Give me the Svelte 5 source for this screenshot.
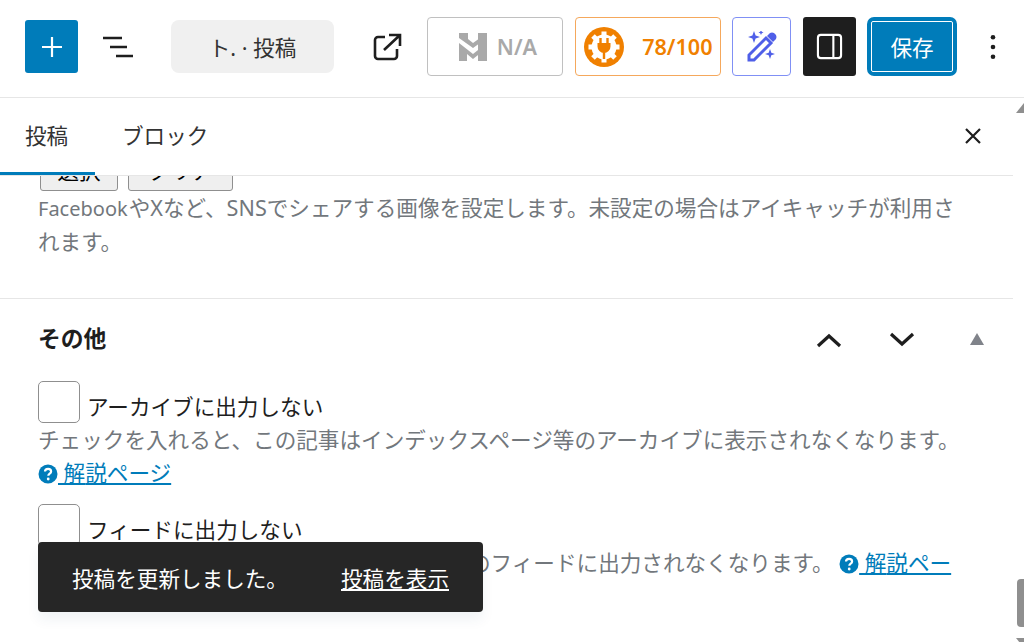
<script>
  const helpUrl = "#";
</script>

{#snippet help()}
  <svg class="help" viewBox="0 0 20 20"><circle cx="10" cy="10" r="9.5" fill="#007cba" /><path d="M7 7.6c0-1.8 1.3-2.8 3.1-2.8s3 1 3 2.6c0 2.3-2.8 2.2-2.8 4.3" fill="none" stroke="#fff" stroke-width="2.2" /><circle cx="10.2" cy="15" r="1.4" fill="#fff" /></svg>
{/snippet}

<div class="page">
  <header class="toolbar">
    <button class="add" aria-label="追加">
      <svg viewBox="0 0 24 24" width="24" height="24"><path d="M12 2v20M2 12h20" stroke="#fff" stroke-width="2.200" /></svg>
    </button>
    <button class="plain outline" aria-label="リスト">
      <svg viewBox="0 0 30 22" width="30" height="22"><path d="M0 2h19M7 11h17M13 20h17" stroke="#1e1e1e" stroke-width="2.400" /></svg>
    </button>
    <div class="title">ト. · 投稿</div>
    <button class="plain external" aria-label="表示">
      <svg viewBox="0 0 30 28" width="30" height="28" fill="none" stroke="#1e1e1e" stroke-width="2.600"><path d="M12 4H5a3 3 0 0 0-3 3v16a3 3 0 0 0 3 3h16a3 3 0 0 0 3-3v-7" /><path d="M11 17 27 2M16 2h11v11" /></svg>
    </button>
    <div class="tools">
      <div class="badge na">
        <svg viewBox="0 0 28 28" width="28" height="28" fill="#a9a9a9"><path d="M0 0h9v6l5 4L28 0v5L14 15 0 5zM19 0h9v28h-9zM0 10l14 11 5-4v5l-5 4-6-5v7H0z" /></svg>
        <span>N/A</span>
      </div>
      <div class="badge score">
        <svg viewBox="0 0 40 40" width="40" height="40">
          <circle cx="20" cy="20" r="20" fill="#f08000" />
          <circle cx="20" cy="20" r="12.500" fill="#fff" />
          <path d="M20 4.500v31M4.500 20h31M9 9l22 22M31 9 9 31" stroke="#fff" stroke-width="5" />
          <path d="M13.500 16h13v3.500a6.500 6.500 0 0 1-13 0z" fill="#f08000" />
          <path d="M16.500 11v5M23.500 11v5M20 25v7" stroke="#f08000" stroke-width="2.400" />
        </svg>
        <span>78/100</span>
      </div>
      <button class="ai" aria-label="AI">
        <svg viewBox="0 0 32 32" width="32" height="32" fill="#4f5fe8">
          <path d="M3 29v-5L20 7l5 5L8 29z" fill="none" stroke="#4f5fe8" stroke-width="3" />
          <path d="M21 5l3-3q2-1 4 0l2 2q1 2 0 4l-3 3z" />
          <path d="M8 0l1.600 4.400L14 6l-4.400 1.600L8 12 6.400 7.600 2 6l4.400-1.600zM15 -1l.8 1.700 1.700.8-1.700.8L15 4l-.8-1.700-1.700-.8 1.700-.8zM24 18l1.300 3.700L29 23l-3.700 1.300L24 28l-1.300-3.700L19 23l3.700-1.300z" />
        </svg>
      </button>
      <button class="panel-toggle" aria-label="設定">
        <svg viewBox="0 0 28 28" width="27" height="27" fill="none" stroke="#fff" stroke-width="2.200"><rect x="2" y="2" width="24" height="24" rx="3" /><path d="M18 2v24" /></svg>
      </button>
      <button class="save"><span>保存</span></button>
    </div>
    <button class="plain more" aria-label="オプション">
      <svg viewBox="0 0 6 26" width="6" height="26" fill="#1e1e1e"><circle cx="3" cy="3.300" r="2.300" /><circle cx="3" cy="13" r="2.300" /><circle cx="3" cy="22.700" r="2.300" /></svg>
    </button>
  </header>

  <div class="body">
    <div class="sidebar">
      <div class="tabs">
        <button class="tab active">投稿</button>
        <button class="tab">ブロック</button>
        <button class="plain close" aria-label="閉じる">
          <svg viewBox="0 0 16 16" width="16" height="16"><path d="M1 1l14 14M15 1 1 15" stroke="#1e1e1e" stroke-width="2.200" /></svg>
        </button>
      </div>
      <div class="scroll">
        <div class="content">
          <section class="ogp">
            <div class="buttons">
              <button class="legacy select">選択</button>
              <button class="legacy clear">クリア</button>
            </div>
            <p class="desc"><span class="latin">Facebook</span>やXなど、SNSでシェアする画像を設定します。未設定の場合はアイキャッチが利用されます。</p>
          </section>
          <section class="other">
            <div class="other-head">
              <h2>その他</h2>
              <svg class="chev first" viewBox="0 0 26 16" width="26" height="16"><path d="M2 14 13 4l11 10" fill="none" stroke="#1e1e1e" stroke-width="3.200" /></svg>
              <svg class="chev" viewBox="0 0 26 16" width="26" height="16"><path d="M2 2l11 10L24 2" fill="none" stroke="#1e1e1e" stroke-width="3.200" /></svg>
              <span class="tri"></span>
            </div>
            <label class="check first-check"><span class="box"></span>アーカイブに出力しない</label>
            <p class="desc">チェックを入れると、この記事はインデックスページ等のアーカイブに表示されなくなります。 <span class="nb">{@render help()}<a href={helpUrl}>{" "}解</a></span><a href={helpUrl}>説ページ</a></p>
            <label class="check second-check"><span class="box"></span>フィードに出力しない</label>
            <p class="desc">チェックを入れると、この記事はサイト全体のフィードに出力されなくなります。 <span class="nb">{@render help()}<a href={helpUrl}>{" "}解</a></span><a href={helpUrl}>説ページ</a></p>
          </section>
        </div>
      </div>
    </div>
    <div class="scrollbar">
      <span class="arrow"></span>
      <span class="thumb"></span>
      <span class="arrow down"></span>
    </div>
  </div>

  <div class="toast">
    <span>投稿を更新しました。</span>
    <a href={helpUrl}>投稿を表示</a>
  </div>
</div>

<style>
  :global(body) { margin: 0; background: #fff; }
  .page { position: relative; width: 1024px; height: 642px; overflow: hidden; display: flex; flex-direction: column; font-family: "Noto Sans", "Noto Sans CJK JP", sans-serif; font-size: 21.6px; color: #1e1e1e; }
  button { font: inherit; color: inherit; padding: 0; border: 0; background: none; display: flex; align-items: center; justify-content: center; }

  .toolbar { height: 98px; flex: none; box-sizing: border-box; border-bottom: 1px solid #e6e6e6; display: flex; align-items: center; padding: 0 0 4px 25px; }
  .add { width: 53px; height: 53px; background: #007cba; border-radius: 3px; }
  .outline { margin-left: 25px; width: 30px; }
  .title { width: 163px; height: 53px; margin-left: 38px; background: #f0f0f0; border-radius: 8px; display: flex; align-items: center; justify-content: center; color: #333; }
  .external { margin-left: 39px; width: 30px; }
  .tools { display: flex; gap: 11.500px; margin-left: 24px; }
  .badge { height: 59px; box-sizing: border-box; border-radius: 4px; border: 1.500px solid; display: flex; align-items: center; font-weight: 600; }
  .na { width: 136px; border-color: #c0c0c0; color: #a9a9a9; justify-content: center; gap: 10px; padding-left: 6px; }
  .score { width: 146px; border-color: #f5a85c; color: #f08000; justify-content: space-between; padding: 0 7px 0 8px; }
  .ai { width: 59px; height: 59px; box-sizing: border-box; border: 1.500px solid #8090f5; border-radius: 4px; }
  .panel-toggle { width: 53px; height: 59px; background: #1e1e1e; border-radius: 3px; }
  .save { width: 90px; height: 59px; box-sizing: border-box; background: #007cba; border-radius: 7px; padding: 4px; }
  .save span { flex: 1; align-self: stretch; border: 1.500px solid #fff; border-radius: 2px; color: #fff; display: flex; align-items: center; justify-content: center; }
  .more { margin-left: 33px; width: 6px; }

  .body { flex: 1; display: flex; min-height: 0; }
  .sidebar { flex: 1; min-width: 0; display: flex; flex-direction: column; }
  .tabs { height: 77.500px; flex: none; box-sizing: border-box; border-bottom: 1.500px solid #e6e6e6; display: flex; align-items: center; }
  .tab { height: 77.500px; box-sizing: border-box; color: #333; padding-bottom: 3px; }
  .tab.active { width: 95px; justify-content: flex-start; padding-left: 25px; box-shadow: inset 0 -3px 0 #007cba; }
  .tab:not(.active) { padding-left: 27px; }
  .close { margin-left: auto; margin-right: 32px; }

  .scroll { flex: 1; min-height: 0; overflow: hidden; }
  .content { margin-top: -28.500px; }
  .ogp { padding: 0 38px 40px; border-bottom: 1.500px solid #e6e6e6; }
  .buttons { display: flex; gap: 10px; margin-left: 2px; }
  .legacy { height: 44px; border: 1px solid #8f8f8f; border-radius: 3px; background: #efefef; color: #000; }
  .select { width: 78px; }
  .clear { width: 105px; }
  .desc { margin: 0; max-width: 930px; color: #72777c; line-height: 33px; }
  .latin { font-size: 20px; margin-right: 1px; }
  .nb { white-space: nowrap; }
  a { color: #007cba; text-decoration: underline; }
  .help { width: 20px; height: 20px; vertical-align: -3px; }

  .other { padding: 0 29px 0 38px; }
  .other-head { height: 79px; display: flex; align-items: center; }
  h2 { margin: -3px auto 0 0; font-size: 22.800px; font-weight: 700; }
  .chev { margin: 2px 0 0 47px; }
  .chev.first { margin: 2px 0 0; }
  .tri { margin: 0 0 0 55px; width: 0; height: 0; border: 7.500px solid transparent; border-top: 0; border-bottom: 12px solid #80838a; }
  .check { display: flex; align-items: flex-end; line-height: 32px; }
  .first-check { margin-top: 3px; }
  .second-check { margin-top: 15px; }
  .box { width: 42px; height: 42px; box-sizing: border-box; border: 1px solid #8f8f8f; border-radius: 5px; background: #fff; margin-right: 7px; }

  .scrollbar { width: 11px; flex: none; display: flex; flex-direction: column; padding: 5px 0 0 3px; box-sizing: border-box; }
  .arrow { flex: none; width: 0; height: 0; border: 8px solid transparent; border-top: 0; border-bottom: 10px solid #8f8f8f; }
  .arrow.down { border: 8px solid transparent; border-bottom: 0; border-top: 10px solid #8f8f8f; margin-top: 11px; margin-bottom: -6px; }
  .thumb { flex: none; width: 12px; height: 48px; margin-left: 1px; border-radius: 4px; background: #8f8f8f; margin-top: auto; }

  .toast { position: absolute; left: 38px; top: 542px; width: 445px; height: 70px; box-sizing: border-box; padding: 0 34px; background: #262626; border-radius: 4px; color: #fff; display: flex; align-items: center; justify-content: space-between; box-shadow: 0 8px 13px rgba(0, 60, 100, 0.06); }
  .toast a { color: #fff; }
</style>
